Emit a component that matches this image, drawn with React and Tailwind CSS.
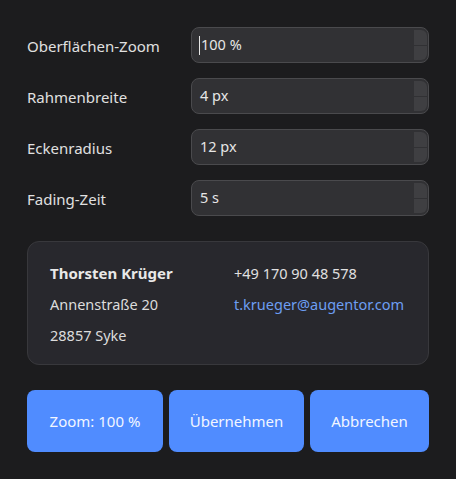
import React from "react";

const fields = [
  { label: "Oberflächen-Zoom", value: "100 %", focused: true },
  { label: "Rahmenbreite", value: "4 px" },
  { label: "Eckenradius", value: "12 px" },
  { label: "Fading-Zeit", value: "5 s" },
];

const buttons = [
  { text: "Zoom: 100 %", w: "w-[136px]" },
  { text: "Übernehmen", w: "w-[135px]" },
  { text: "Abbrechen", w: "flex-1" },
];

const SpinField = ({ value, focused }) => (
  <div className="flex h-[36px] flex-1 items-center rounded-[8px] border border-[#4a4a4d] bg-[#313134] pl-[7px] pr-[1px]">
    <div className="flex flex-1 items-center text-[14.5px] text-[#e6e6e6]">
      {focused && <span className="mr-[1px] h-[19px] w-px bg-[#e6e6e6]" />}
      <span className={focused ? "" : "pl-[1px]"}>{value}</span>
    </div>
    <div className="flex h-[30px] w-[13px] flex-col gap-px">
      <div className="flex-1 rounded-tr-[6px] bg-[#3f3f42]" />
      <div className="flex-1 rounded-br-[6px] bg-[#3f3f42]" />
    </div>
  </div>
);

export default function App() {
  return (
    <div
      className="min-h-[479px] w-[456px] bg-[#1c1c1e] px-[27px] pt-[27px] text-[#e0e0e0]"
      style={{ fontFamily: '"Noto Sans", "Open Sans", sans-serif' }}
    >
      <div className="flex flex-col gap-[15px]">
        {fields.map((f) => (
          <div key={f.label} className="flex items-center">
            <div className="w-[164px] pt-[2px] text-[15px] text-[#e0e0e0]">{f.label}</div>
            <SpinField value={f.value} focused={f.focused} />
          </div>
        ))}
      </div>

      {/* contact card */}
      <div className="mt-[25px] h-[124px] rounded-[12px] border border-[#38383c] bg-[#28282d] px-[22px] py-[16px] text-[14.5px] leading-[31px]">
        <div className="grid grid-cols-[184px_1fr]">
          <div className="text-[15px] font-bold text-[#e8e8e8]">Thorsten Krüger</div>
          <div className="text-[#e0e0e0]">+49 170 90 48 578</div>
          <div className="text-[#dcdcdc]">Annenstraße 20</div>
          <div className="text-[#6d9ef2]">t.krueger@augentor.com</div>
          <div className="text-[#dcdcdc]">28857 Syke</div>
        </div>
      </div>

      <div className="mt-[25px] flex gap-[6px]">
        {buttons.map((b) => (
          <button
            key={b.text}
            className={`${b.w} h-[62px] whitespace-nowrap rounded-[8px] bg-[#508cff] text-[15px] text-[#f2f6ff]`}
          >
            {b.text}
          </button>
        ))}
      </div>
    </div>
  );
}
